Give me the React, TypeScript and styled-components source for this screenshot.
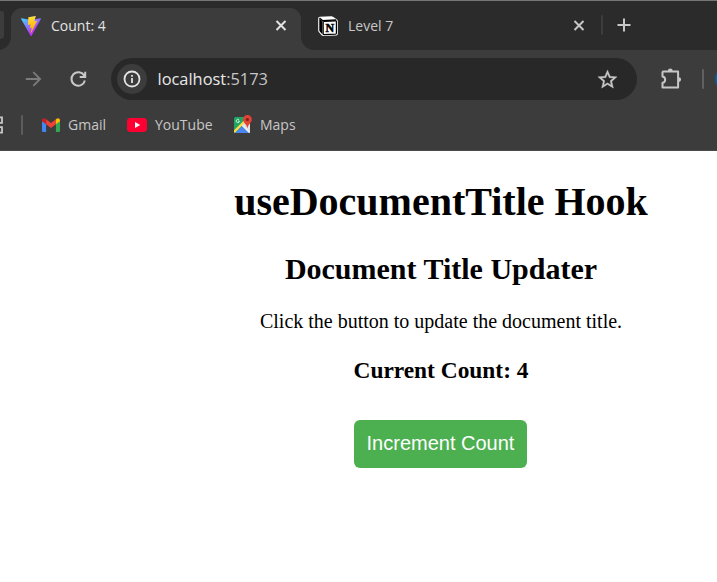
import React, { useState } from 'react';
import styled, { createGlobalStyle } from 'styled-components';

const GlobalStyle = createGlobalStyle`
  * { box-sizing: border-box; }
  html, body { margin: 0; background: #fff; overflow: hidden; }
`;

const Window = styled.div`
  width: 717px;
  height: 582px;
  overflow: hidden;
  display: flex;
  flex-direction: column;
  background: #fff;
  font-family: 'Open Sans', 'Noto Sans', sans-serif;
  svg { display: block; flex: none; }
`;

const TabStrip = styled.div`
  height: 50px;
  flex: none;
  display: flex;
  align-items: flex-start;
  background: #2b2b2b;
  border-top: 1px solid #747674;
`;

const PreviousTab = styled.div`
  width: 4px;
  height: 28px;
  margin: 10px 7px 0 0;
  background: #3c3c3c;
  border-radius: 0 5px 9px 0;
`;

const Tab = styled.div<{ $active?: boolean }>`
  position: relative;
  width: ${(p) => (p.$active ? 290 : 300)}px;
  height: 42px;
  margin-top: 7px;
  padding: 0 ${(p) => (p.$active ? 13 : 15)}px 7px ${(p) => (p.$active ? 10 : 17)}px;
  display: flex;
  align-items: center;
  background: ${(p) => (p.$active ? '#3c3c3c' : 'transparent')};
  border-radius: 11px 11px 0 0;
  color: ${(p) => (p.$active ? '#e3e3e3' : '#c7c7c7')};
`;

const TabFoot = styled.span<{ $side: 'left' | 'right' }>`
  position: absolute;
  bottom: 0;
  ${(p) => p.$side}: -13px;
  width: 13px;
  height: 13px;
  background: radial-gradient(
    circle at ${(p) => (p.$side === 'left' ? '0 0' : '100% 0')},
    transparent 12.5px,
    #3c3c3c 13.5px
  );
`;

const TabTitle = styled.span`
  flex: 1;
  margin-left: 10px;
  font-size: 14px;
  line-height: 20px;
  white-space: nowrap;
`;

const Divider = styled.span<{ $color: string; $before?: number }>`
  width: 2px;
  height: 20px;
  flex: none;
  margin-left: ${(p) => p.$before ?? 0}px;
  border-radius: 1px;
  background: ${(p) => p.$color};
`;

const StripEnd = styled.div`
  height: 48px;
  display: flex;
  align-items: center;
  gap: 14px;
`;

const Toolbar = styled.div`
  height: 58px;
  flex: none;
  display: flex;
  align-items: center;
  padding-left: 23px;
  background: #3c3c3c;
`;

const NavButtons = styled.div`
  display: flex;
  gap: 25px;
  padding-bottom: 1px;
`;

const AddressBar = styled.div`
  width: 526px;
  height: 42px;
  margin: 0 22px 0 23px;
  padding: 0 18px 0 6px;
  display: flex;
  align-items: center;
  flex: none;
  border-radius: 21px;
  background: #282828;
`;

const SiteInfo = styled.span`
  width: 30px;
  height: 30px;
  display: grid;
  place-items: center;
  border-radius: 50%;
  background: #3c3c3c;
`;

const Url = styled.span`
  flex: 1;
  margin-left: 10.5px;
  color: #c7c7c7;
  font-size: 16.4px;
  line-height: 24px;
`;

const Host = styled.span`
  color: #e8e8e8;
`;

const Avatar = styled.span`
  width: 30px;
  height: 30px;
  margin-left: 11px;
  flex: none;
  border-radius: 50%;
  background: #00639b;
`;

const BookmarksBar = styled.div`
  height: 43px;
  flex: none;
  display: flex;
  align-items: center;
  padding-bottom: 9px;
  background: #3c3c3c;
  border-bottom: 1px solid #4a4a4a;
`;

const Bookmark = styled.span<{ $before: number }>`
  display: flex;
  align-items: center;
  gap: 8px;
  margin-left: ${(p) => p.$before}px;
  color: #c7c7c7;
  font-size: 14px;
  line-height: 20px;
`;

const Label = styled.span<{ $width: number }>`
  width: ${(p) => p.$width}px;
  white-space: nowrap;
`;

const Page = styled.main`
  flex: 1;
  display: flex;
  flex-direction: column;
  align-items: center;
  padding: 28px 0 0 165px;
  color: #000;
  font-family: 'Liberation Serif', 'Times New Roman', serif;
  white-space: nowrap;
`;

const Title = styled.h1`
  margin: 0;
  font-size: 40px;
  line-height: 46px;
`;

const Subtitle = styled.h2`
  margin: 27px 0 0;
  font-size: 30px;
  line-height: 34px;
`;

const Text = styled.p`
  margin: 24px 0 0;
  font-size: 20px;
  line-height: 22px;
`;

const Count = styled.h3`
  margin: 25px 0 0;
  font-size: 23.4px;
  line-height: 26px;
`;

const Button = styled.button`
  width: 173px;
  height: 48px;
  margin: 37px 1px 0 0;
  padding: 0 0 2px;
  border: 0;
  border-radius: 6px;
  background: #4caf50;
  color: #fff;
  font: 20px/23px 'Liberation Sans', Arial, sans-serif;
`;

const ViteIcon = () => (
  <svg width="20" height="20" viewBox="0 0 256 257">
    <defs>
      <linearGradient id="body" x1="-.8%" x2="57.6%" y1="7.7%" y2="78.4%">
        <stop offset="0" stopColor="#41D1FF" />
        <stop offset="1" stopColor="#BD34FE" />
      </linearGradient>
      <linearGradient id="bolt" x1="43.4%" x2="50.3%" y1="2.2%" y2="89%">
        <stop offset="0" stopColor="#FFEA83" />
        <stop offset=".08" stopColor="#FFDD35" />
        <stop offset="1" stopColor="#FFA800" />
      </linearGradient>
    </defs>
    <path fill="url(#body)" d="M255.153 37.938L134.897 252.976c-2.483 4.44-8.862 4.466-11.382.048L.875 37.958c-2.746-4.814 1.371-10.646 6.827-9.67l120.385 21.517a6.537 6.537 0 0 0 2.322-.004l117.867-21.483c5.438-.991 9.574 4.796 6.877 9.62Z" />
    <path fill="url(#bolt)" d="M185.432.063L96.44 17.501a3.268 3.268 0 0 0-2.634 3.014l-5.474 92.456a3.268 3.268 0 0 0 3.997 3.378l24.777-5.718c2.318-.535 4.413 1.507 3.936 3.838l-7.361 36.047c-.495 2.426 1.782 4.5 4.151 3.78l15.304-4.649c2.372-.72 4.652 1.36 4.15 3.788l-11.698 56.621c-.732 3.542 3.979 5.473 5.943 2.437l1.313-2.028l72.516-144.72c1.215-2.423-.88-5.186-3.54-4.672l-25.505 4.922c-2.396.462-4.435-1.77-3.759-4.114l16.646-57.705c.677-2.35-1.37-4.583-3.769-4.113Z" />
  </svg>
);

const NotionIcon = () => (
  <svg width="20" height="20" viewBox="0 0 20 20">
    <path d="M1.7.8 13.1.2Q14.2.1 15 .7L19 3.6Q19.8 4.2 19.8 5V18Q19.8 19.3 18.4 19.4L5.4 20Q4.2 20 3.5 19.2L.8 16Q.2 15.2.2 14.4V2.2Q.2 1 1.7.8Z" fill="#fff" />
    <path d="M1.3 2.6 4.5 5.1V18.6L1.8 15.6Q1.3 15 1.3 14.2Z" fill="#000" />
    <path d="M1.5 2.1 4.8 4.7 18.2 4" fill="none" stroke="#000" strokeWidth="1.3" />
    <path d="M5.2 6.4Q5.2 5.6 6 5.5L17.7 4.9Q18.4 4.9 18.4 5.6V17.3Q18.4 18 17.6 18.1L6 18.7Q5.2 18.7 5.2 18Z" fill="#fff" stroke="#000" strokeWidth="1.2" />
    <text x="11.9" y="15.9" textAnchor="middle" fontFamily="'Liberation Serif', serif" fontWeight="700" fontSize="12" stroke="#000" strokeWidth=".5">N</text>
  </svg>
);

const CloseIcon = ({ color }: { color: string }) => (
  <svg width="14" height="14" viewBox="0 0 14 14" stroke={color} strokeWidth="2">
    <path d="M2.5 2 11.5 11M11.5 2 2.5 11" />
  </svg>
);

const PlusIcon = () => (
  <svg width="14" height="14" viewBox="0 0 14 14" stroke="#c7c7c7" strokeWidth="2">
    <path d="M7 .5V13.5M.5 7H13.5" />
  </svg>
);

const ForwardIcon = () => (
  <svg width="20" height="20" viewBox="0 0 20 20" fill="none" stroke="#7c7c7c" strokeWidth="1.8">
    <path d="M2.8 10H17M10.3 3.2 17.1 10 10.3 16.8" />
  </svg>
);

const ReloadIcon = () => (
  <svg width="20" height="20" viewBox="0 0 20 20" fill="none" stroke="#c7c7c7" strokeWidth="2">
    <path d="M16.9 11.6A6.8 6.8 0 1 1 16.1 6.4L16.7 7.4M17.2 2.7V8H11.7" />
  </svg>
);

const InfoIcon = () => (
  <svg width="18" height="18" viewBox="0 0 18 18" fill="none" stroke="#e3e3e3" strokeWidth="1.8">
    <circle cx="9" cy="9" r="7.5" />
    <path d="M9 8V13M9 4.9V6.7" />
  </svg>
);

const StarIcon = () => (
  <svg width="23" height="23" viewBox="0 0 24 24" fill="#c7c7c7" stroke="#c7c7c7" strokeWidth=".35">
    <path d="m22 9.24-7.19-.62L12 2 9.19 8.63 2 9.24l5.46 4.73L5.82 21 12 17.27 18.18 21l-1.63-7.03L22 9.24zM12 15.4l-3.76 2.27 1-4.28-3.32-2.88 4.38-.38L12 6.1l1.71 4.04 4.38.38-3.32 2.88 1 4.28L12 15.4z" />
  </svg>
);

const ExtensionIcon = () => (
  <svg width="24" height="24" viewBox="0 0 24 24">
    <path d="M4.2 4.5H19.1V20.4H3.5V15.8A3.2 3.2 0 0 0 3.5 9.5V5.2Z" fill="none" stroke="#c7c7c7" strokeWidth="2" strokeLinejoin="round" />
    <path d="M8.9 4A2.4 2.4 0 0 1 13.7 4ZM19.7 10.2A2.4 2.4 0 0 1 19.7 15Z" fill="#c7c7c7" />
  </svg>
);

const AppsIcon = () => (
  <svg width="3" height="18" viewBox="0 0 3 18" fill="none" stroke="#c7c7c7" strokeWidth="1.8">
    <path d="M0 1.4H2V6.8H0M0 11.2H2V16.6H0" />
  </svg>
);

const GmailIcon = () => (
  <svg width="18" height="14" viewBox="0 0 18 14">
    <path d="M0 2.5 4.1 5.6V14H1.3Q0 14 0 12.7Z" fill="#4285f4" />
    <path d="M18 2.5 13.9 5.6V14H16.7Q18 14 18 12.7Z" fill="#34a853" />
    <path d="M4.1 1.2 9 4.9 13.9 1.2V6.3L9 10 4.1 6.3Z" fill="#ea4335" />
    <path d="M0 2.2C0 .3 2-.4 3.4.7L4.1 1.2V6.3L0 3.2Z" fill="#c5221f" />
    <path d="M18 2.2C18 .3 16-.4 14.6.7L13.9 1.2V6.3L18 3.2Z" fill="#fbbc04" />
  </svg>
);

const YouTubeIcon = () => (
  <svg width="20" height="14" viewBox="0 0 20 14">
    <rect width="20" height="14" rx="3.4" fill="#ff0033" />
    <path d="M8 4 13.2 7 8 10Z" fill="#fff" />
  </svg>
);

const MapsIcon = () => (
  <svg width="18" height="19" viewBox="0 0 18 19">
    <defs>
      <clipPath id="sheet"><rect y="2" width="16" height="16" rx="1.5" /></clipPath>
    </defs>
    <g clipPath="url(#sheet)">
      <rect y="2" width="16" height="16" fill="#1fa463" />
      <path d="M8.2 9.8 16 2V18H8Z" fill="#dfe2e5" />
      <path d="M8.2 11 15.5 18H1Z" fill="#4b85ee" />
      <path d="M-1 18 12 5" stroke="#ffd94a" strokeWidth="2.4" />
      <path d="M8.3 10.3 16.5 18.5" stroke="#f1f1f1" strokeWidth="1.4" />
    </g>
    <path d="M5 4.9A1.6 1.6 0 1 0 5.4 6.1H4" fill="none" stroke="#e3f6eb" strokeWidth=".9" />
    <path d="M13.4 0A4.4 4.4 0 0 0 9 4.4C9 8 12.7 8.4 13.4 13.5 14.1 8.4 17.8 8 17.8 4.4A4.4 4.4 0 0 0 13.4 0Z" fill="#e34335" />
    <circle cx="13.4" cy="4.5" r="1.6" fill="#7b2019" />
  </svg>
);

export default function App() {
  const [count, setCount] = useState(4);
  return (
    <Window>
      <GlobalStyle />
      <TabStrip>
        <PreviousTab />
        <Tab $active>
          <TabFoot $side="left" />
          <ViteIcon />
          <TabTitle>Count: {count}</TabTitle>
          <CloseIcon color="#e3e3e3" />
          <TabFoot $side="right" />
        </Tab>
        <Tab>
          <NotionIcon />
          <TabTitle>Level 7</TabTitle>
          <CloseIcon color="#c7c7c7" />
        </Tab>
        <StripEnd>
          <Divider $color="#3c3c3c" />
          <PlusIcon />
        </StripEnd>
      </TabStrip>
      <Toolbar>
        <NavButtons>
          <ForwardIcon />
          <ReloadIcon />
        </NavButtons>
        <AddressBar>
          <SiteInfo><InfoIcon /></SiteInfo>
          <Url><Host>localhost</Host>:5173</Url>
          <StarIcon />
        </AddressBar>
        <ExtensionIcon />
        <Divider $color="#606060" $before={19} />
        <Avatar />
      </Toolbar>
      <BookmarksBar>
        <AppsIcon />
        <Divider $color="#5c5c5c" $before={18} />
        <Bookmark $before={19}><GmailIcon /><Label $width={38}>Gmail</Label></Bookmark>
        <Bookmark $before={21}><YouTubeIcon /><Label $width={58}>YouTube</Label></Bookmark>
        <Bookmark $before={21}><MapsIcon /><Label $width={37}>Maps</Label></Bookmark>
      </BookmarksBar>
      <Page>
        <Title>useDocumentTitle Hook</Title>
        <Subtitle>Document Title Updater</Subtitle>
        <Text>Click the button to update the document title.</Text>
        <Count>Current Count: {count}</Count>
        <Button onClick={() => setCount(count + 1)}>Increment Count</Button>
      </Page>
    </Window>
  );
}
